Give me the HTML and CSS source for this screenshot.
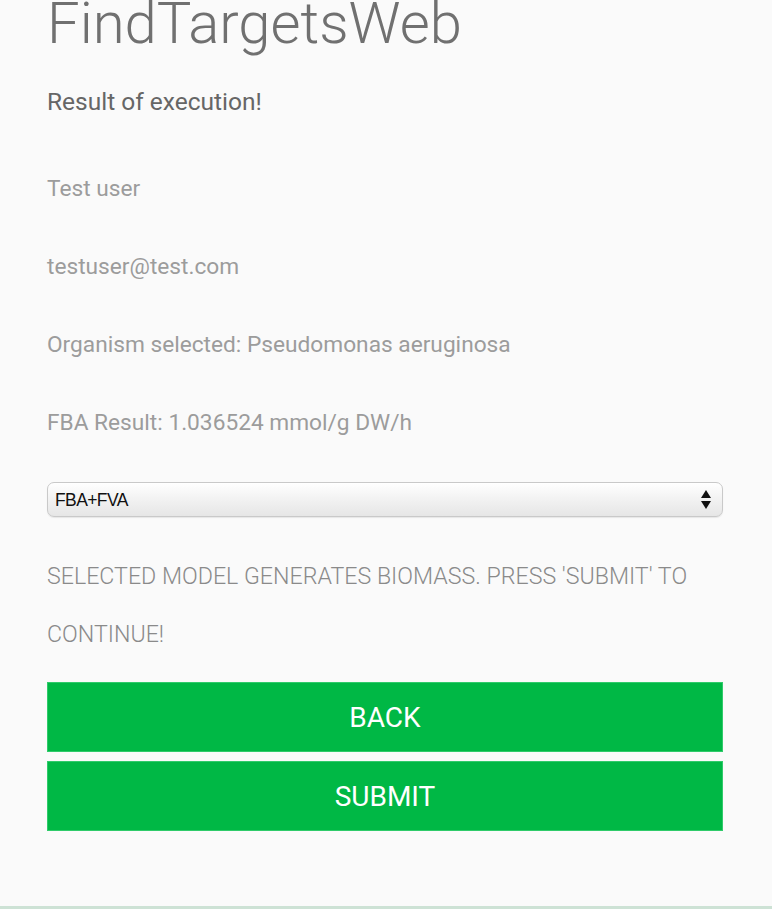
FILE: index.html
```html
<!DOCTYPE html>
<html>
<head>
<meta charset="utf-8">
<link rel="stylesheet" href="styles.css">
</head>
<body>
<div class="page">
  <h1 class="title">FindTargetsWeb</h1>
  <p class="subtitle">Result of execution!</p>
  <p class="info">Test user</p>
  <p class="info">testuser@test.com</p>
  <p class="info">Organism selected: Pseudomonas aeruginosa</p>
  <p class="info">FBA Result: 1.036524 mmol/g DW/h</p>
  <div class="select-wrap">
    <select class="select">
      <option>FBA+FVA</option>
    </select>
    <span class="arrows"><span class="up"></span><span class="down"></span></span>
  </div>
  <p class="notice">SELECTED MODEL GENERATES BIOMASS. PRESS 'SUBMIT' TO CONTINUE!</p>
  <div class="actions">
    <button class="btn">BACK</button>
    <button class="btn">SUBMIT</button>
  </div>
</div>
</body>
</html>
```
FILE: styles.css
```css
html, body {
  margin: 0;
  padding: 0;
  background: #fafafa;
}
.page {
  box-sizing: border-box;
  min-height: 100vh;
  padding: 0 49px 0 47px;
  border-bottom: 3px solid #cde2d5;
  font-family: Roboto, "Liberation Sans", sans-serif;
  display: flex;
  flex-direction: column;
}
.title {
  margin: -5px 0 0;
  font-size: 58px;
  line-height: 57px;
  font-weight: 300;
  color: #707070;
  white-space: nowrap;
}
.subtitle {
  margin: 35px 0 0;
  font-size: 24.5px;
  line-height: 30px;
  font-weight: 400;
  color: #666;
}
.subtitle + .info {
  margin-top: 33px;
}
.info {
  margin: 0;
  font-size: 22.7px;
  line-height: 78px;
  font-weight: 400;
  color: #9c9c9c;
}
.select-wrap {
  position: relative;
  margin-top: 20px;
  height: 35px;
}
.select {
  appearance: none;
  -webkit-appearance: none;
  box-sizing: border-box;
  width: 100%;
  height: 35px;
  margin: 0;
  padding: 0 40px 0 7px;
  border: 1px solid #c9c9c9;
  border-radius: 7px;
  background: linear-gradient(#ffffff 0%, #f3f3f3 45%, #e6e6e6 100%);
  box-shadow: inset 0 1px 0 #fff, 0 1px 1px rgba(0,0,0,0.08);
  font-family: "Liberation Sans", Arial, sans-serif;
  font-size: 17.5px;
  letter-spacing: -0.6px;
  color: #111;
}
.arrows {
  position: absolute;
  right: 12px;
  top: 8px;
  display: flex;
  flex-direction: column;
  gap: 3px;
  pointer-events: none;
}
.up, .down {
  width: 0;
  height: 0;
  border-left: 5px solid transparent;
  border-right: 5px solid transparent;
}
.up { border-bottom: 8px solid #111; }
.down { border-top: 8px solid #111; }
.notice {
  margin: 30px 0 0;
  font-size: 23.2px;
  line-height: 58px;
  font-weight: 300;
  color: #8a8a8a;
}
.actions {
  margin-top: 19px;
  display: flex;
  flex-direction: column;
  gap: 9px;
}
.btn {
  height: 70px;
  border: 1px solid #2fcb6a;
  background: #00b845;
  color: #fff;
  font-family: Roboto, "Liberation Sans", sans-serif;
  font-size: 28px;
  font-weight: 400;
  padding: 0;
}
```
